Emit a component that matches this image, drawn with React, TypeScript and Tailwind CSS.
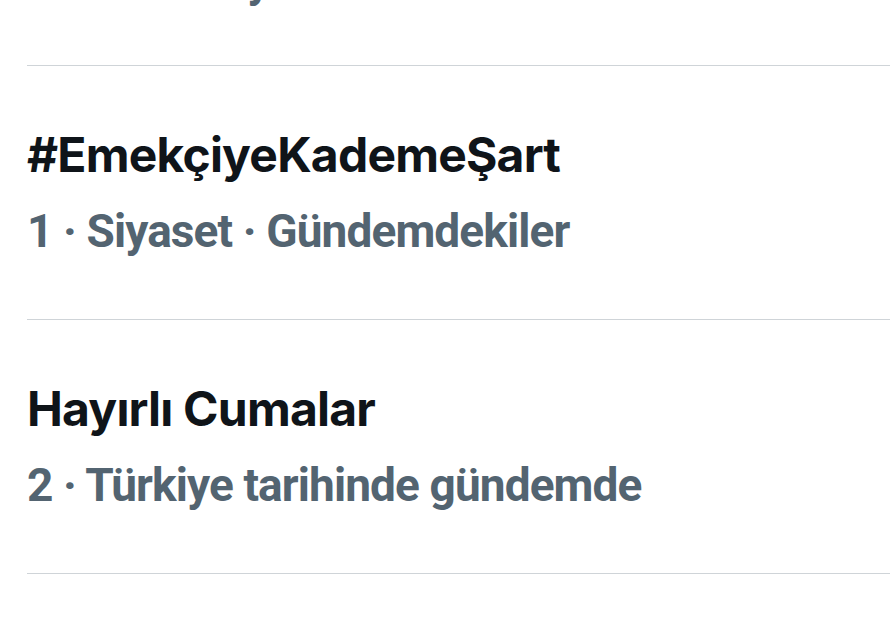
const trends = [
  { title: "Gündem", meta: "Film · Türkiye", first: true },
  { title: "#EmekçiyeKademeŞart", meta: "1 · Siyaset · Gündemdekiler" },
  { title: "Hayırlı Cumalar", meta: "2 · Türkiye tarihinde gündemde" },
];

function TrendRow({ title, meta, first }: { title: string; meta: string; first?: boolean }) {
  return (
    <div className={`border-b border-[#cfd4d8] pt-[61px] ${first ? "pb-[56px]" : "pb-[60px]"}`}>
      <div
        className="h-[56px] text-[48px] leading-[56px] font-bold tracking-[-0.8px] text-[#0f1419] whitespace-nowrap"
        style={{ fontFamily: "Inter, 'Noto Sans', sans-serif" }}
      >
        {title}
      </div>
      <div
        className="mt-[20px] h-[56px] text-[46px] leading-[56px] font-bold tracking-[-0.9px] text-[#536471] whitespace-nowrap"
        style={{ fontFamily: "Roboto, 'Noto Sans', sans-serif" }}
      >
        {meta}
      </div>
    </div>
  );
}

export default function App() {
  return (
    <div className="w-[890px] h-[630px] overflow-hidden bg-white">
      <div className="ml-[27px] -mt-[184px]">
        {trends.map((t) => (
          <TrendRow key={t.title} title={t.title} meta={t.meta} first={t.first} />
        ))}
      </div>
    </div>
  );
}
